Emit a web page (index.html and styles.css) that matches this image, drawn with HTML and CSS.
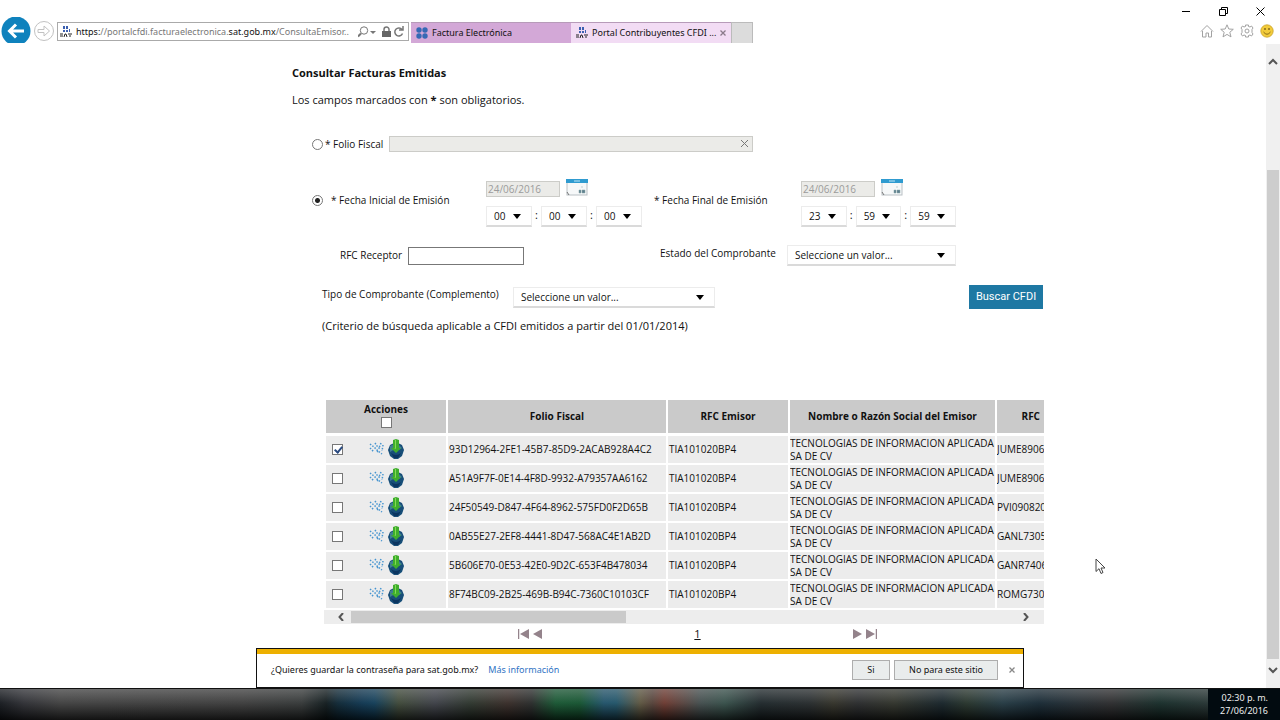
FILE: index.html
```html
<!DOCTYPE html>
<html lang="es">
<head>
<meta charset="utf-8">
<title>Portal Contribuyentes CFDI</title>
<link rel="stylesheet" href="styles.css">
</head>
<body>
<svg class="defs" aria-hidden="true">
  <symbol id="cal" viewBox="0 0 22 17">
    <rect x="1" y="1" width="20" height="15" fill="#f6f8f9" stroke="#b9c0c4"/>
    <rect x="0" y="0" width="22" height="4" fill="#2f9bd0"/>
    <path d="M8 2h6" stroke="#bfe6f7" stroke-width="1"/>
    <path d="M13 11h2v3h-2zM16 11h3v3h-3zM15 8h2" fill="#5f7f8e" stroke="#8aa" stroke-width=".5"/>
    <path d="M1 13l2 3" stroke="#777"/>
  </symbol>
  <symbol id="dots" viewBox="0 0 15 13">
    <path d="M1 2l4 3 4 4 4 3M1 6l4 4M6 1l2 3 3 3M12 1l-2 5M14 3l-1 6M8 9l2 2" fill="none" stroke="#4795d0" stroke-width="1.500" stroke-dasharray="1.500 1.400"/>
  </symbol>
  <symbol id="down" viewBox="0 0 16 20">
    <path d="M8 3l6 3 2 5-2 6-4 3H6l-4-3-2-6 2-5z" fill="#174e78"/>
    <path d="M2 7l4-2 1 5-5 3zM11 6l3 3-3 2z" fill="#3f7f91"/>
    <path d="M3 14q5 4 10 0l-3 5H6z" fill="#0b3560"/>
    <path d="M5 1l3-1 3 1v8h2l-5 5-5-5h2z" fill="#3fae2c"/>
    <path d="M7 1h1v9l-2-1h1z" fill="#83db55"/>
  </symbol>
  <symbol id="sat" viewBox="0 0 12 12">
    <path d="M3 0h2v3H3zM6 0h2v3H6zM3 4h2v2H3zM6 4h2v2H6zM9 3h1v3H9z" fill="#3c60b0"/>
    <path d="M0 8h3M0 10h3M4 11l1-3h1l1 3M8 8h4M9 10h2" fill="none" stroke="#222"/>
  </symbol>
</svg>

<header class="browser">
  <nav class="nav-bar">
    <button class="plain" aria-label="Atrás"><svg width="30" height="26" viewBox="0 0 30 26"><circle cx="15" cy="14" r="14.500" fill="#0f82bd"/><path d="M23 14H9M15 7.500L8.500 14l6.500 6.500" fill="none" stroke="#fff" stroke-width="3"/></svg></button>
    <button class="plain forward" aria-label="Adelante"><svg width="22" height="22" viewBox="0 0 22 22"><circle cx="11" cy="11" r="9.500" fill="#fff" stroke="#c2c2c2"/><path d="M5 9.500h6V6l5.500 5-5.500 5v-3.500H5z" fill="none" stroke="#c2c2c2"/></svg></button>
    <div class="address">
      <svg width="12" height="12"><use href="#sat"/></svg>
      <a class="url" href="#"><span>https:</span>//portalcfdi.facturaelectronica.<span>sat.gob.mx</span>/ConsultaEmisor..</a>
      <svg width="48" height="14" viewBox="0 0 48 14" fill="none" stroke="#777"><circle cx="6" cy="5.500" r="3.700"/><path d="M3 8.500L0 11.500" stroke-width="2"/><path d="M12 6h6l-3 3z" fill="#777" stroke="none"/><path d="M26 6V4.500a2.500 2.500 0 015 0V6" stroke-width="1.500"/><path d="M24 6h9v6h-9z" fill="#666" stroke="none"/><path d="M44 4.500a4 4 0 10.500 4M45 1v4h-4" stroke-width="1.500"/></svg>
    </div>
    <div class="tab">
      <svg width="12" height="12" viewBox="0 0 12 12" fill="#3569b5"><circle cx="3" cy="3" r="2.700"/><circle cx="9" cy="3" r="2.700"/><circle cx="3" cy="9" r="2.700"/><circle cx="9" cy="9" r="2.700"/></svg>
      <span>Factura Electrónica</span>
    </div>
    <div class="tab active">
      <svg width="12" height="12"><use href="#sat"/></svg>
      <span>Portal Contribuyentes CFDI ...</span>
      <button class="plain" aria-label="Cerrar pestaña"><svg width="6" height="6" viewBox="0 0 6 6"><path d="M.5.5l5 5M5.500.5l-5 5" stroke="#8a7a8a" stroke-width="1.300"/></svg></button>
    </div>
    <button class="new-tab" aria-label="Nueva pestaña"></button>
  </nav>
  <div class="window-tools">
    <div class="window-controls">
      <button class="plain" aria-label="Minimizar"><svg width="9" height="9" viewBox="0 0 9 9"><path d="M0 4.500h8" stroke="#000"/></svg></button>
      <button class="plain" aria-label="Restaurar"><svg width="9" height="9" viewBox="0 0 9 9" fill="none" stroke="#000"><path d="M.5 2.500h6v6h-6zM2.500 2.500v-2h6v6h-2"/></svg></button>
      <button class="plain" aria-label="Cerrar"><svg width="9" height="9" viewBox="0 0 9 9"><path d="M.5.5l8 8M8.500.5l-8 8" stroke="#000"/></svg></button>
    </div>
    <div class="browser-icons">
      <button class="plain" aria-label="Inicio"><svg width="14" height="14" viewBox="0 0 14 14" fill="none" stroke="#a2a2a2"><path d="M1 7.500L7 1.500l6 6M2.500 7v6H6V9h2.500v4h3V7"/></svg></button>
      <button class="plain" aria-label="Favoritos"><svg width="14" height="14" viewBox="0 0 14 14" fill="none" stroke="#a2a2a2"><path d="M7 .8l1.800 4.200 4.500.3-3.500 3 1.200 4.600L7 10.400l-4 2.500 1.200-4.600-3.500-3L5.200 5z"/></svg></button>
      <button class="plain" aria-label="Herramientas"><svg width="14" height="14" viewBox="0 0 14 14" fill="none" stroke="#a2a2a2"><path d="M5.500 1h3v1.500l1.500.5 1.500-1L13 4l-1 1.500v3L13 10l-1.500 2-1.500-1-1.500.5V13h-3v-1.500L4 11l-1.500 1L1 10l1-1.500v-3L1 4l1.500-2L4 3l1.500-.5z"/><circle cx="7" cy="7" r="2"/></svg></button>
      <button class="plain" aria-label="Comentarios"><svg width="14" height="14" viewBox="0 0 14 14"><circle cx="7" cy="7" r="6.200" fill="#f2cb3a" stroke="#c9a22c" stroke-width=".8"/><path d="M5 4v2M9 4v2" stroke="#6a5310" stroke-width="1.200"/><path d="M3.500 8q3.500 4.500 7 0" fill="none" stroke="#8a6b14"/></svg></button>
    </div>
  </div>
</header>

<div class="viewport">
  <main class="page">
    <div class="content">
      <h1>Consultar Facturas Emitidas</h1>
      <p class="intro">Los campos marcados con <b>*</b> son obligatorios.</p>
      <form class="search">
        <div class="row folio">
          <input type="radio" name="modo" id="modo-folio">
          <label for="modo-folio">* Folio Fiscal</label>
          <span class="folio-box"><input type="text" aria-label="Folio Fiscal" disabled><svg width="7" height="7" viewBox="0 0 7 7"><path d="M0 0l7 7M7 0L0 7" stroke="#777"/></svg></span>
        </div>
        <div class="row dates">
          <input type="radio" name="modo" id="modo-fecha" checked>
          <label for="modo-fecha">* Fecha Inicial de Emisión</label>
          <div class="date-group">
            <div class="date"><input type="text" value="24/06/2016" aria-label="Fecha inicial" disabled><button type="button" class="plain" aria-label="Calendario inicial"><svg width="22" height="17"><use href="#cal"/></svg></button></div>
            <div class="time"><span class="select"><select aria-label="Hora inicial"><option>00</option></select></span><i>:</i><span class="select"><select aria-label="Minuto inicial"><option>00</option></select></span><i>:</i><span class="select"><select aria-label="Segundo inicial"><option>00</option></select></span></div>
          </div>
          <label for="fecha-final">* Fecha Final de Emisión</label>
          <div class="date-group">
            <div class="date"><input type="text" value="24/06/2016" id="fecha-final" disabled><button type="button" class="plain" aria-label="Calendario final"><svg width="22" height="17"><use href="#cal"/></svg></button></div>
            <div class="time"><span class="select"><select aria-label="Hora final"><option>23</option></select></span><i>:</i><span class="select"><select aria-label="Minuto final"><option>59</option></select></span><i>:</i><span class="select"><select aria-label="Segundo final"><option>59</option></select></span></div>
          </div>
        </div>
        <div class="row receptor">
          <label for="rfc">RFC Receptor</label>
          <input type="text" id="rfc">
          <label for="estado" class="raised">Estado del Comprobante</label>
          <span class="select wide"><select id="estado"><option>Seleccione un valor...</option></select></span>
        </div>
        <div class="row tipo">
          <label for="tipo" class="raised">Tipo de Comprobante (Complemento)</label>
          <span class="select wide"><select id="tipo"><option>Seleccione un valor...</option></select></span>
          <button type="button" class="search-button">Buscar CFDI</button>
        </div>
        <p class="note">(Criterio de búsqueda aplicable a CFDI emitidos a partir del 01/01/2014)</p>
      </form>

      <section class="results">
        <table>
          <colgroup><col class="c-actions"><col class="c-folio"><col class="c-rfc"><col class="c-name"><col></colgroup>
          <thead><tr><th><label for="all">Acciones</label><input type="checkbox" id="all"></th><th>Folio Fiscal</th><th>RFC Emisor</th><th>Nombre o Razón Social del Emisor</th><th class="cut">RFC</th></tr></thead>
          <tbody>
            <tr><td><div class="actions"><input type="checkbox" aria-label="Seleccionar" checked><svg width="15" height="13"><use href="#dots"/></svg><svg width="16" height="20"><use href="#down"/></svg></div></td><td>93D12964-2FE1-45B7-85D9-2ACAB928A4C2</td><td>TIA101020BP4</td><td>TECNOLOGIAS DE INFORMACION APLICADA<br>SA DE CV</td><td>JUME89062</td></tr>
            <tr><td><div class="actions"><input type="checkbox" aria-label="Seleccionar"><svg width="15" height="13"><use href="#dots"/></svg><svg width="16" height="20"><use href="#down"/></svg></div></td><td>A51A9F7F-0E14-4F8D-9932-A79357AA6162</td><td>TIA101020BP4</td><td>TECNOLOGIAS DE INFORMACION APLICADA<br>SA DE CV</td><td>JUME89062</td></tr>
            <tr><td><div class="actions"><input type="checkbox" aria-label="Seleccionar"><svg width="15" height="13"><use href="#dots"/></svg><svg width="16" height="20"><use href="#down"/></svg></div></td><td>24F50549-D847-4F64-8962-575FD0F2D65B</td><td>TIA101020BP4</td><td>TECNOLOGIAS DE INFORMACION APLICADA<br>SA DE CV</td><td>PVI0908205</td></tr>
            <tr><td><div class="actions"><input type="checkbox" aria-label="Seleccionar"><svg width="15" height="13"><use href="#dots"/></svg><svg width="16" height="20"><use href="#down"/></svg></div></td><td>0AB55E27-2EF8-4441-8D47-568AC4E1AB2D</td><td>TIA101020BP4</td><td>TECNOLOGIAS DE INFORMACION APLICADA<br>SA DE CV</td><td>GANL73051</td></tr>
            <tr><td><div class="actions"><input type="checkbox" aria-label="Seleccionar"><svg width="15" height="13"><use href="#dots"/></svg><svg width="16" height="20"><use href="#down"/></svg></div></td><td>5B606E70-0E53-42E0-9D2C-653F4B478034</td><td>TIA101020BP4</td><td>TECNOLOGIAS DE INFORMACION APLICADA<br>SA DE CV</td><td>GANR7406</td></tr>
            <tr><td><div class="actions"><input type="checkbox" aria-label="Seleccionar"><svg width="15" height="13"><use href="#dots"/></svg><svg width="16" height="20"><use href="#down"/></svg></div></td><td>8F74BC09-2B25-469B-B94C-7360C10103CF</td><td>TIA101020BP4</td><td>TECNOLOGIAS DE INFORMACION APLICADA<br>SA DE CV</td><td>ROMG7302</td></tr>
          </tbody>
        </table>
        <div class="hscroll">
          <svg width="6" height="8" viewBox="0 0 6 8"><path d="M5 0L1.500 4 5 8" fill="none" stroke="#555" stroke-width="2"/></svg>
          <div class="hthumb"></div>
          <svg width="6" height="8" viewBox="0 0 6 8"><path d="M1 0l3.500 4L1 8" fill="none" stroke="#555" stroke-width="2"/></svg>
        </div>
        <nav class="pager">
          <div><button class="plain" aria-label="Primera"><svg width="11" height="10" viewBox="0 0 11 10"><path d="M.5 0v10" stroke="#94838b" stroke-width="1.500"/><path d="M11 0v10L2 5z" fill="#94838b"/></svg></button><button class="plain" aria-label="Anterior"><svg width="9" height="10" viewBox="0 0 9 10"><path d="M9 0v10L0 5z" fill="#94838b"/></svg></button></div>
          <a href="#">1</a>
          <div><button class="plain" aria-label="Siguiente"><svg width="9" height="10" viewBox="0 0 9 10"><path d="M0 0v10l9-5z" fill="#94838b"/></svg></button><button class="plain" aria-label="Última"><svg width="11" height="10" viewBox="0 0 11 10"><path d="M10.500 0v10" stroke="#94838b" stroke-width="1.500"/><path d="M0 0v10l9-5z" fill="#94838b"/></svg></button></div>
        </nav>
      </section>
    </div>
  </main>
  <div class="vscroll">
    <svg width="10" height="7" viewBox="0 0 10 7"><path d="M1 6l4-4 4 4" fill="none" stroke="#555" stroke-width="2"/></svg>
    <div class="vtrack"><div class="vthumb"></div></div>
    <svg width="10" height="7" viewBox="0 0 10 7"><path d="M1 1l4 4 4-4" fill="none" stroke="#555" stroke-width="2"/></svg>
  </div>
</div>

<aside class="prompt">
  <span>¿Quieres guardar la contraseña para sat.gob.mx?</span>
  <a href="#">Más información</a>
  <button class="yes">Si</button>
  <button class="no">No para este sitio</button>
  <button class="plain" aria-label="Cerrar aviso"><svg width="6" height="6" viewBox="0 0 6 6"><path d="M.5.5l5 5M5.500.5l-5 5" stroke="#888" stroke-width="1.300"/></svg></button>
</aside>

<svg class="pointer" width="11" height="17" viewBox="0 0 11 17"><path d="M1 1v12.500l3-2.800 2 4.800 2-1-2-4.500h4z" fill="#fff" stroke="#444"/></svg>

<footer class="taskbar"><div class="apps"></div><div class="clock"><span>02:30 p. m.</span><span>27/06/2016</span></div></footer>
</body>
</html>
```

FILE: styles.css
```css
* { box-sizing: border-box; }
body {
  margin: 0;
  min-height: 100vh;
  display: flex;
  flex-direction: column;
  position: relative;
  background: #fff;
  color: #111;
  font: 11px/16px "Open Sans", "Noto Sans", sans-serif;
}
input, select, button { font: inherit; color: inherit; margin: 0; }
svg { display: block; flex: none; }
.defs { position: absolute; width: 0; height: 0; }
.plain { border: 0; padding: 0; background: none; }

/* Browser frame */
.browser { display: flex; justify-content: space-between; height: 44px; font: 9px/14px "Noto Sans", "Open Sans", sans-serif; }
.nav-bar { display: flex; align-items: flex-start; padding: 22px 0 0 1px; }
.nav-bar > .plain { margin-top: -5px; }
.nav-bar > .forward { margin: -2px 2px 0; }
.address { display: flex; align-items: center; gap: 4px; width: 352px; height: 19px; padding: 0 2px; border: 1px solid #aaa; margin-right: 2px; }
.url { flex: 1; overflow: hidden; white-space: nowrap; color: #777; text-decoration: none; }
.url span { color: #111; }
.tab { display: flex; align-items: center; gap: 4px; width: 160px; height: 21px; padding: 0 5px; background: #d3a8d7; border-top: 1px solid #b79bb9; white-space: nowrap; }
.tab.active { background: #f2dcf4; }
.tab .plain { margin-left: auto; }
.new-tab { width: 22px; height: 21px; border: 1px solid #bbb; border-bottom: 0; padding: 0; background: #dcdcdc; }
.window-tools { display: flex; flex-direction: column; align-items: flex-end; gap: 8px; padding: 7px 6px 0 0; }
.window-controls { display: flex; gap: 28px; padding-right: 9px; }
.browser-icons { display: flex; gap: 6px; }

/* Page */
.viewport { display: flex; flex: 1; }
.page { flex: 1; display: flex; justify-content: center; padding-left: 70px; }
.content { width: 752px; padding-top: 21px; }
h1 { margin: 0 0 11px; font-size: 11px; line-height: 16px; }
.intro { margin: 0; }
.search { padding: 28px 0 0 20px; }
.row { display: flex; }
.row label { font-size: 10px; white-space: nowrap; }
input[type="radio"] { appearance: none; width: 11px; height: 11px; border: 1px solid #777; border-radius: 50%; background: #fff; }
input[type="radio"]:checked { background: radial-gradient(circle, #222 0 2px, #fff 3px); }
input[type="text"] { padding: 0 1px; border-radius: 0; font-size: 10px; }
input:disabled { color: #9b9b9b; background: #ebebe8; border: 1px solid #ccccc8; }
.folio { align-items: center; }
.folio label { width: 64px; margin-left: 2px; }
.folio-box { display: flex; position: relative; width: 364px; }
.folio-box input { flex: 1; min-width: 0; height: 16px; }
.folio-box svg { position: absolute; right: 5px; top: 4px; }
.dates { align-items: flex-start; margin-top: 27px; }
.dates > input { margin-top: 16px; }
.dates > label { width: 147px; margin-top: 13px; }
.dates > input + label { width: 155px; margin-left: 8px; }
.date-group { width: 168px; }
.date-group:last-child { width: 155px; }
.date { display: flex; align-items: flex-start; gap: 6px; height: 27px; }
.date input { width: 74px; height: 16px; margin-top: 2px; font-size: 10px; }
.time { display: flex; line-height: 18px; }
.time i { width: 9px; text-align: center; font-style: normal; }
.time .select { width: 46px; }
.select { position: relative; display: flex; height: 21px; }
.select select { appearance: none; width: 100%; padding: 0 7px; border: 1px solid #ececec; border-bottom: 2px solid #dadada; border-radius: 0; background: #fff; font-size: 10px; }
.select::after { content: ""; position: absolute; right: 11px; top: 8px; border: 4px solid transparent; border-top: 5px solid #000; border-bottom: 0; pointer-events: none; }
.receptor { margin-top: 18px; padding-left: 28px; }
.receptor > label { width: 68px; padding-top: 2px; }
.receptor input { width: 116px; height: 18px; margin-top: 2px; border: 1px solid #777; }
.receptor > .raised { width: 127px; margin-left: 136px; padding-top: 0; }
.receptor .select { width: 169px; }
.tipo { align-items: flex-start; margin-top: 18px; padding-left: 10px; }
.tipo > label { width: 191px; padding-top: 2px; }
.tipo .select { width: 202px; margin-top: 3px; }
.search-button { width: 74px; height: 24px; margin: 1px 1px 0 auto; padding: 0; border: 0; background: #1e78a3; color: #fff; font: 11px/24px Roboto, sans-serif; }
.note { margin: 9px 0 0 10px; }

/* Results */
.results { width: 720px; margin: 65px 0 0 32px; overflow: hidden; font-size: 10px; line-height: 13px; }
table { width: 722px; table-layout: fixed; border-spacing: 2px; margin-top: -1px; }
.c-actions { width: 120px; }
.c-folio { width: 218px; }
.c-rfc { width: 120px; }
.c-name { width: 205px; }
th { height: 34px; padding: 0; background: #cacaca padding-box; border-bottom: 1px solid transparent; }
th label, th input { display: block; }
th label { line-height: 12px; }
th input { margin: 2px auto 2px; }
th.cut { text-align: right; padding-right: 4px; }
td { height: 27px; padding: 0 0 0 1px; background: #ececec; overflow: hidden; white-space: nowrap; }
td:nth-child(n+4) { padding: 0; }
input[type="checkbox"] { appearance: none; width: 11px; height: 11px; border: 1px solid #777; background: #fff; }
input[type="checkbox"]:checked { position: relative; }
input[type="checkbox"]:checked::after { content: ""; position: absolute; left: 3px; top: 0; width: 3px; height: 6px; border: solid #2a4a80; border-width: 0 2px 2px 0; transform: rotate(40deg); }
.actions { display: flex; align-items: center; padding: 0 0 0 5px; }
.actions input { margin-right: 26px; }
.actions svg { margin-bottom: 2px; }
.actions svg + svg { margin-left: 4px; }
.hscroll { display: flex; align-items: center; height: 14px; padding: 0 15px 0 14px; background: #ededed; }
.hthumb { width: 275px; height: 12px; margin: 0 auto 0 7px; background: #cacaca; }
.pager { display: flex; justify-content: space-between; align-items: center; height: 19px; padding: 0 167px 0 194px; font-size: 11px; }
.pager div { display: flex; gap: 4px; }
.pager a { color: #111; }
.vscroll { display: flex; flex-direction: column; align-items: center; width: 14px; padding: 14px 0; background: #f0f0f0; }
.vtrack { flex: 1; align-self: stretch; margin: 0 1px 8px; padding-top: 105px; display: flex; }
.vthumb { flex: 1; background: #cdcdcd; }

/* Overlays */
.prompt {
  position: absolute; bottom: 32px; left: 20%; right: 20%; height: 40px;
  display: flex; align-items: center; padding: 4px 8px 0 14px;
  background: #fff; border: 1px solid #111; box-shadow: inset 0 5px #edb000;
  font: 9px/14px "Noto Sans", "Open Sans", sans-serif;
}
.prompt a { margin: 0 auto 0 10px; color: #2f73c4; text-decoration: none; }
.yes, .no { height: 20px; padding: 0; border: 1px solid #adadad; background: #e9ecec; }
.yes { width: 38px; margin-right: 4px; }
.no { width: 104px; margin-right: 11px; }
.pointer { position: absolute; left: 1095px; top: 558px; }

.taskbar { display: flex; height: 32px; background: #020b10; border-top: 1px solid #111; }
.apps {
  flex: 1;
  background:
    linear-gradient(rgba(160,160,160,.4), rgba(60,60,60,.2) 45%, rgba(0,0,0,.75)),
    linear-gradient(90deg, #161a20 0, #33343a 2%, #484848 5%, #444 20%, #3a3e3e 25%, #101c1f 27%, #0c2b3c 28%, #0d3c5c 30%, #104464 31%, #46523f 33%, #444750 36%, #313b31 39%, #3e302b 42%, #2c2f2e 44%, #176237 46%, #146035 48%, #225e7a 50%, #226079 51%, #6b6248 53%, #614a40 54%, #7d4035 55%, #4b5858 58%, #3c5a53 60%, #202b2f 63%, #292f31 67%, #38372c 69%, #2d2f31 71%, #35382e 74%, #17262d 78%, #29392f 80%, #26404b 83%, #172c39 86%, #263138 89%, #303032 92%, #17312d 96%, #283938 100%);
}
.clock { display: flex; flex-direction: column; width: 72px; padding: 2px 12px 0 0; text-align: right; color: #eee; font: 9px/13px "Noto Sans", "Open Sans", sans-serif; white-space: nowrap; }
```
